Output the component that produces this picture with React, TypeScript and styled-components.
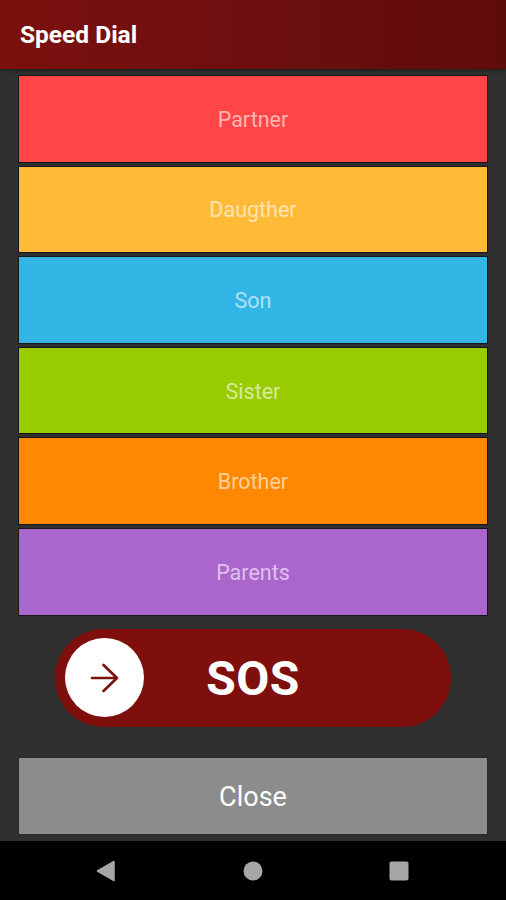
import React from "react";
import styled, { createGlobalStyle } from "styled-components";

const GlobalStyle = createGlobalStyle`
  html, body { margin: 0; padding: 0; background: #303030; }
  body { font-family: Roboto, "Noto Sans", "Liberation Sans", sans-serif; }
  * { box-sizing: border-box; }
`;

const Screen = styled.div`
  width: 506px;
  height: 900px;
  display: flex;
  flex-direction: column;
  background: #303030;
  overflow: hidden;
`;

const Header = styled.header`
  height: 69px;
  flex: none;
  display: flex;
  align-items: center;
  padding-left: 20px;
  background: linear-gradient(90deg, #7b110f 0%, #6c0e0e 55%, #5e0c0b 100%);
  box-shadow: 0 2px 3px rgba(0, 0, 0, 0.35);
`;

const Title = styled.h1`
  margin: 0;
  color: #ffffff;
  font-size: 24.5px;
  font-weight: 700;
  letter-spacing: 0px;
`;

const Content = styled.main`
  flex: 1;
  display: flex;
  flex-direction: column;
  padding: 6px 18px 0;
`;

const DialList = styled.div`
  display: flex;
  flex-direction: column;
  gap: 3px;
`;

const DialButton = styled.button<{ $bg: string }>`
  height: 87.6px;
  width: 100%;
  border: 1px solid #151515;
  background: ${(p) => p.$bg};
  color: rgba(255, 255, 255, 0.62);
  font-family: Roboto, "Noto Sans", "Liberation Sans", sans-serif;
  font-size: 21.5px;
  font-weight: 400;
  display: flex;
  align-items: center;
  justify-content: center;
  padding: 1px 0 0;
  cursor: pointer;
`;

const SosTrack = styled.div`
  position: relative;
  margin: 13.4px 0 0 37px;
  width: 396px;
  height: 98px;
  border-radius: 49px;
  background: #7f0f0c;
  display: flex;
  align-items: center;
  justify-content: center;
`;

const SosLabel = styled.span`
  color: #ffffff;
  font-size: 48px;
  font-weight: 700;
  letter-spacing: 0.5px;
  line-height: 1;
  padding-top: 2px;
`;

const Thumb = styled.div`
  position: absolute;
  left: 10px;
  top: 9.5px;
  width: 79px;
  height: 79px;
  border-radius: 50%;
  background: #ffffff;
  display: flex;
  align-items: center;
  justify-content: center;
`;

const CloseButton = styled.button`
  margin-top: 30px;
  height: 78px;
  width: 100%;
  border: 1px solid #2a2a2a;
  background: #8c8c8c;
  color: #ffffff;
  font-family: Roboto, "Noto Sans", "Liberation Sans", sans-serif;
  font-size: 27px;
  font-weight: 400;
  padding: 3px 0 0;
  display: flex;
  align-items: center;
  justify-content: center;
`;

const NavBar = styled.nav`
  height: 59px;
  flex: none;
  background: #000000;
  display: grid;
  grid-template-columns: repeat(3, 1fr);
  align-items: center;
  justify-items: center;
`;

const NavSlot = styled.div<{ $shift: number }>`
  display: flex;
  align-items: center;
  justify-content: center;
  transform: translateX(${(p) => p.$shift}px);
`;

const dials = [
  { label: "Partner", color: "#ff4545" },
  { label: "Daugther", color: "#ffbb37" },
  { label: "Son", color: "#33b6e5" },
  { label: "Sister", color: "#99cc00" },
  { label: "Brother", color: "#ff8800" },
  { label: "Parents", color: "#aa66cc" },
];

export default function App() {
  return (
    <>
      <GlobalStyle />
      <Screen>
        <Header>
          <Title>Speed Dial</Title>
        </Header>
        <Content>
          <DialList>
            {dials.map((d) => (
              <DialButton key={d.label} $bg={d.color}>
                {d.label}
              </DialButton>
            ))}
          </DialList>
          <SosTrack>
            <Thumb>
              <svg width="30" height="32" viewBox="0 0 30 32" fill="none">
                <path
                  d="M2 16H27M13.5 3L27 16L13.5 29"
                  stroke="#7a1010"
                  strokeWidth="2.6"
                  strokeLinecap="round"
                  strokeLinejoin="round"
                />
              </svg>
            </Thumb>
            <SosLabel>SOS</SosLabel>
          </SosTrack>
          <CloseButton>Close</CloseButton>
        </Content>
        <NavBar>
          <NavSlot $shift={22}>
            <svg width="20" height="22" viewBox="0 0 20 22">
              <path d="M18 1.5V20.5L1.5 11Z" fill="#a6a6a6" stroke="#a6a6a6" strokeWidth="1.5" strokeLinejoin="round" />
            </svg>
          </NavSlot>
          <NavSlot $shift={0}>
            <svg width="20" height="20" viewBox="0 0 20 20">
              <circle cx="10" cy="10" r="9.5" fill="#a6a6a6" />
            </svg>
          </NavSlot>
          <NavSlot $shift={-23}>
            <svg width="20" height="20" viewBox="0 0 20 20">
              <rect x="0.5" y="0.5" width="19" height="19" rx="2" fill="#a6a6a6" />
            </svg>
          </NavSlot>
        </NavBar>
      </Screen>
    </>
  );
}
